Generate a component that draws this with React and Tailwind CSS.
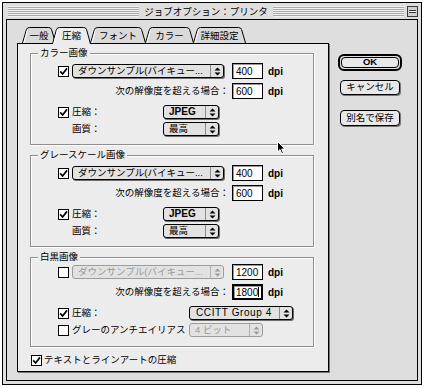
import React from 'react';

const FONT = "font-['Liberation_Sans','Noto_Sans_CJK_JP',sans-serif]";

const tabs = [
  { label: '一般', w: 34, cls: 'w-[34px]' },
  { label: '圧縮', w: 39, cls: 'w-[39px] -ml-[4px]', active: true },
  { label: 'フォント', w: 56, cls: 'w-[56px] -ml-[1px]' },
  { label: 'カラー', w: 49, cls: 'w-[49px] -ml-[1px]' },
  { label: '詳細設定', w: 53, cls: 'w-[53px] -ml-[1px]' },
];

const groups = [
  {
    title: 'カラー画像',
    sample: true,
    res: '400',
    limit: '600',
    comp: 'JPEG',
    compW: 'w-[56px]',
    labelW: 'w-[91px]',
  },
  {
    title: 'グレースケール画像',
    sample: true,
    res: '400',
    limit: '600',
    comp: 'JPEG',
    compW: 'w-[56px]',
    labelW: 'w-[91px]',
  },
  {
    title: '白黒画像',
    sample: false,
    res: '1200',
    limit: '1800',
    comp: 'CCITT Group 4',
    compW: 'w-[104px]',
    labelW: 'w-[117px]',
    mono: true,
  },
];

function Check({ checked }) {
  return (
    <svg width="11" height="11" viewBox="0 0 11 11" className="shrink-0">
      <rect x="0.5" y="0.5" width="10" height="10" fill="#fff" stroke="#000" />
      {checked && (
        <path d="M2.2 5.4 L4.6 8 L9 2.4" fill="none" stroke="#000" strokeWidth="1.7" />
      )}
    </svg>
  );
}

function Arrows({ disabled }) {
  const c = disabled ? '#9a9a9a' : '#000';
  return (
    <svg width="7" height="9" viewBox="0 0 7 9">
      <path d="M3.5 0.5 L6.5 3.5 L0.5 3.5 Z" fill={c} />
      <path d="M0.5 5.5 L6.5 5.5 L3.5 8.5 Z" fill={c} />
    </svg>
  );
}

function Popup({ label, w, disabled, bold }) {
  return (
    <div
      className={`${w} h-[14px] flex rounded-[3px] border bg-[#e2e2e2] ${
        disabled
          ? 'border-[#9c9c9c] text-[#9a9a9a]'
          : 'border-black text-black shadow-[1px_1px_0_#6e6e6e]'
      }`}
    >
      <span
        className={`flex-1 pl-[5px] leading-[12px] whitespace-nowrap overflow-hidden ${
          bold ? 'text-[10px] font-bold' : 'text-[9.5px]'
        }`}
      >
        {label}
      </span>
      <span
        className={`w-[13px] flex items-center justify-center border-l ${
          disabled ? 'border-[#b0b0b0]' : 'border-[#8a8a8a]'
        }`}
      >
        <Arrows disabled={disabled} />
      </span>
    </div>
  );
}

function Field({ value, focused }) {
  return (
    <div
      className={`w-[31px] h-[16px] bg-white border-black flex items-center text-[10px] shadow-[inset_1px_1px_0_#9a9a9a] ${
        focused ? 'border-2 pl-[2px]' : 'border pl-[3px]'
      }`}
    >
      {value}
      {focused && <span className="w-px h-[10px] bg-black" />}
    </div>
  );
}

function Group({ g }) {
  return (
    <div
      className={`relative w-[284px] border border-[#8e8e8e] shadow-[1px_1px_0_#fff,inset_1px_1px_0_#fff] flex flex-col ${
        g.mono ? 'h-[90px] pt-[6px]' : 'h-[92px] pt-[9px]'
      }`}
    >
      <span className="absolute -top-[7px] left-[7px] px-[2px] bg-[#ececec] text-[9.5px] leading-[12px]">
        {g.title}
      </span>

      <div className="h-[16px] flex items-center pl-[27px]">
        <Check checked={g.sample} />
        <div className="ml-[3px]">
          <Popup label="ダウンサンプル(バイキュー..." w="w-[152px]" disabled={!g.sample} />
        </div>
        <div className="ml-[8px]">
          <Field value={g.res} />
        </div>
        <span className="ml-[5px] text-[10px] font-bold">dpi</span>
      </div>

      <div className="mt-[4px] h-[16px] flex items-center">
        <span className="w-[198px] text-right text-[9.5px] leading-[12px] whitespace-nowrap">
          次の解像度を超える場合：
        </span>
        <div className="ml-[3px]">
          <Field value={g.limit} focused={g.mono} />
        </div>
        <span className="ml-[5px] text-[10px] font-bold">dpi</span>
      </div>

      <div className="mt-[6px] h-[14px] flex items-center pl-[27px]">
        <Check checked />
        <span className={`ml-[3px] ${g.labelW} text-[9.5px] leading-[12px]`}>圧縮：</span>
        {g.mono ? (
          <div className={`${g.compW} h-[14px] flex rounded-[3px] border border-black bg-[#e2e2e2] shadow-[1px_1px_0_#6e6e6e]`}>
            <span className="flex-1 pl-[6px] text-[10px] leading-[12px] tracking-[0.6px] whitespace-nowrap">
              {g.comp}
            </span>
            <span className="w-[13px] flex items-center justify-center border-l border-[#8a8a8a]">
              <Arrows />
            </span>
          </div>
        ) : (
          <Popup label={g.comp} w={g.compW} bold />
        )}
      </div>

      <div className={`mt-[3px] h-[14px] flex items-center ${g.mono ? 'pl-[27px]' : 'pl-[41px]'}`}>
        {g.mono && <Check checked={false} />}
        <span
          className={`${g.mono ? 'ml-[3px]' : ''} ${g.labelW} text-[9.5px] leading-[12px] whitespace-nowrap`}
        >
          {g.mono ? 'グレーのアンチエイリアス：' : '画質：'}
        </span>
        {g.mono ? (
          <Popup label="4 ビット" w="w-[74px]" disabled />
        ) : (
          <Popup label="最高" w="w-[56px]" />
        )}
      </div>
    </div>
  );
}

function Tab({ t }) {
  const h = t.active ? 17 : 16;
  const w = t.w;
  const d = `M0.5 ${h} L4.4 2.6 Q5.1 0.5 7.4 0.5 L${w - 7.4} 0.5 Q${w - 5.1} 0.5 ${w - 4.4} 2.6 L${w - 0.5} ${h}`;
  return (
    <div
      className={`relative ${t.cls} ${
        t.active ? 'h-[17px] z-10' : 'h-[16px]'
      } flex justify-center text-[9.5px] leading-[17px]`}
    >
      <svg width={w} height={h} className="absolute left-0 top-0">
        <path d={d} fill={t.active ? '#ececec' : '#dadada'} stroke="#000" />
        <path d={`M1.8 ${h} L5.4 3.2`} fill="none" stroke="#fff" strokeWidth="1" />
      </svg>
      <span className="relative">{t.label}</span>
    </div>
  );
}

export default function App() {
  return (
    <div className={`relative w-[425px] h-[388px] bg-white pl-[2px] pt-[2px] text-black ${FONT}`}>
      <div className="w-[420px] h-[383px] border border-black bg-[#dedede] flex flex-col px-[3px] pb-[3px]">
        <div className="h-[16px] flex items-center pl-[2px] gap-[3px]">
          <div className="flex-1 h-[11px] flex justify-center bg-[repeating-linear-gradient(to_bottom,#f2f2f2_0px,#f2f2f2_1px,#a9a9a9_1px,#a9a9a9_2px)]">
            <span className="bg-[#dedede] px-[5px] text-[9.5px] leading-[11px]">
              ジョブオプション：プリンタ
            </span>
          </div>
          <div className="w-[11px] h-[11px] border border-[#3a3a3a] bg-[#d0d0d0] flex flex-col justify-center px-[1px]">
            <div className="h-[3px] border-y border-[#3a3a3a] bg-[#f4f4f4]" />
          </div>
        </div>

        <div className="flex-1 border border-black flex pl-[10px] pt-[7px]">
          <div className="w-[312px] flex flex-col">
            <div className="h-[16px] flex items-start pl-[5px]">
              {tabs.map((t) => (
                <Tab key={t.label} t={t} />
              ))}
            </div>
            <div className="h-[329px] border border-black bg-[#ececec] shadow-[1px_1px_0_#777] px-[12px] pt-[9px] flex flex-col gap-[10px]">
              {groups.map((g) => (
                <Group key={g.title} g={g} />
              ))}
              <div className="-mt-[5px] h-[16px] flex items-center pl-[1px]">
                <Check checked />
                <span className="ml-[2px] text-[9.5px] leading-[12px]">テキストとラインアートの圧縮</span>
              </div>
            </div>
          </div>

          <div className="ml-[9px] mt-[27px] flex flex-col items-center w-[64px]">
            <div className="w-[64px] h-[17px] rounded-[6px] border-2 border-black p-[1px]">
              <div className="h-full rounded-[4px] border border-black bg-[#e8e8e8] flex items-center justify-center text-[9.5px] font-bold">
                OK
              </div>
            </div>
            <div className="mt-[9px] w-[60px] h-[15px] rounded-[4px] border border-black bg-[#e8e8e8] shadow-[1px_1px_0_#777] flex items-center justify-center text-[9.5px]">
              キャンセル
            </div>
            <div className="mt-[15px] w-[60px] h-[16px] rounded-[4px] border border-black bg-[#e8e8e8] shadow-[1px_1px_0_#777] flex items-center justify-center text-[9.5px]">
              別名で保存
            </div>
          </div>
        </div>
      </div>

      <svg width="9" height="14" viewBox="0 0 9 14" className="absolute left-[277px] top-[141px]">
        <path d="M0.5 0.5 L0.5 11 L3 8.6 L4.8 12.8 L6.4 12.1 L4.7 8 L8 8 Z" fill="#000" stroke="#fff" strokeWidth="1" />
      </svg>
    </div>
  );
}
